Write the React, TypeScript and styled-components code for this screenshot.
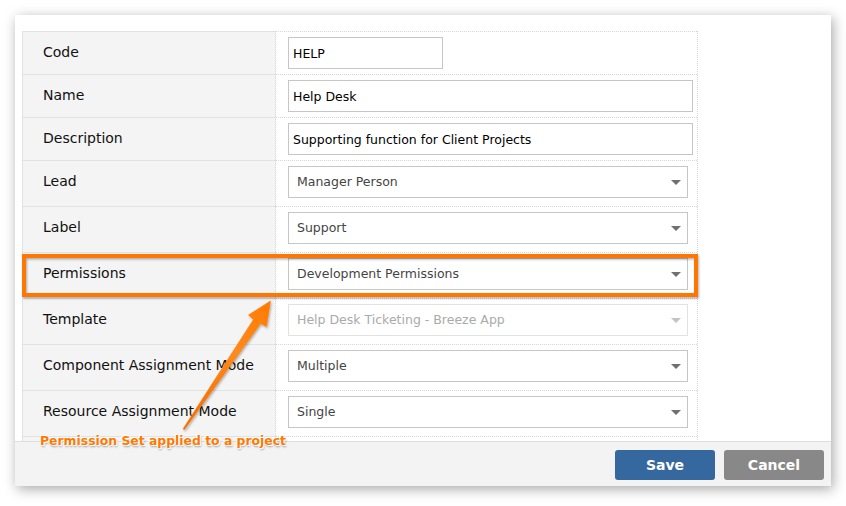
import React from "react";
import styled, { createGlobalStyle } from "styled-components";

const Global = createGlobalStyle`
  html, body { margin: 0; padding: 0; background: #ffffff; }
  body { font-family: "DejaVu Sans", Verdana, sans-serif; }
  * { box-sizing: border-box; }
`;

const Page = styled.div`
  position: relative;
  width: 846px;
  height: 506px;
  padding: 15px;
  overflow: hidden;
`;

const Dialog = styled.div`
  width: 816px;
  height: 471px;
  background: #ffffff;
  display: flex;
  flex-direction: column;
  box-shadow: 2px 3px 12px rgba(0, 0, 0, 0.35);
`;

const Body = styled.div`
  flex: 1;
  overflow: hidden;
  padding: 16px 0 0 7px;
`;

const Table = styled.div`
  width: 676px;
  border-left: 1px solid #e2e2e2;
  border-right: 1px dotted #d6d6d6;
`;

const Row = styled.div<{ $h: number }>`
  display: grid;
  grid-template-columns: 253px 1fr;
  height: ${(p) => p.$h}px;
`;

const LabelCell = styled.div`
  background: #f4f4f4;
  border-top: 1px solid #e2e2e2;
  border-right: 1px dotted #d6d6d6;
  padding: 11px 0 0 20px;
  font-size: 14px;
  line-height: 18px;
  color: #111111;
`;

const ValueCell = styled.div`
  border-top: 1px dotted #d6d6d6;
  padding: 5px 4px 0 12px;
`;

const TextInput = styled.div<{ $w?: number }>`
  width: ${(p) => (p.$w ? `${p.$w}px` : "100%")};
  height: 32px;
  border: 1px solid #c6c6c6;
  background: #fff;
  padding: 0 4px;
  display: flex;
  align-items: center;
  font-size: 12.5px;
  color: #000;
`;

const Select = styled.div<{ $disabled?: boolean }>`
  width: 400px;
  height: 32px;
  border: 1px solid ${(p) => (p.$disabled ? "#e2e2e2" : "#c6c6c6")};
  background: #fff;
  padding: 0 6px 1px 8px;
  display: flex;
  align-items: center;
  justify-content: space-between;
  font-size: 12.5px;
  color: ${(p) => (p.$disabled ? "#aaaaaa" : "#444444")};
`;

const Caret = styled.span<{ $disabled?: boolean }>`
  width: 0;
  height: 0;
  margin-top: 1px;
  border-left: 5px solid transparent;
  border-right: 5px solid transparent;
  border-top: 5px solid ${(p) => (p.$disabled ? "#c4c4c4" : "#707070")};
`;

const Footer = styled.div`
  height: 45px;
  flex: none;
  background: #f3f3f3;
  border-top: 1px solid #dedede;
  display: flex;
  justify-content: flex-end;
  align-items: flex-start;
  gap: 9px;
  padding: 8px 7px 0 0;
`;

const Button = styled.button<{ $variant: "primary" | "secondary" }>`
  width: 100px;
  height: 30px;
  border: none;
  border-radius: 3px;
  background: ${(p) => (p.$variant === "primary" ? "#34689e" : "#888888")};
  color: #ffffff;
  font-family: "DejaVu Sans", Verdana, sans-serif;
  font-weight: bold;
  font-size: 14px;
  padding: 0;
`;

const Overlay = styled.svg`
  position: absolute;
  left: 0;
  top: 0;
  pointer-events: none;
`;

const Note = styled.div`
  position: absolute;
  left: 40px;
  top: 432px;
  font-family: "DejaVu Sans", Verdana, sans-serif;
  font-weight: bold;
  font-size: 12.4px;
  line-height: 18px;
  color: #ff7800;
  white-space: nowrap;
  text-shadow: 0 0 1px #fff, 0 0 2px #fff, 1px 1px 0 #fff, -1px -1px 0 #fff,
    1px 2px 2px rgba(0, 0, 0, 0.35);
`;

type Field =
  | { label: string; kind: "input"; value: string; w?: number }
  | { label: string; kind: "select"; value: string; disabled?: boolean };

const fields: Field[] = [
  { label: "Code", kind: "input", value: "HELP", w: 155 },
  { label: "Name", kind: "input", value: "Help Desk" },
  { label: "Description", kind: "input", value: "Supporting function for Client Projects" },
  { label: "Lead", kind: "select", value: "Manager Person" },
  { label: "Label", kind: "select", value: "Support" },
  { label: "Permissions", kind: "select", value: "Development Permissions" },
  { label: "Template", kind: "select", value: "Help Desk Ticketing - Breeze App", disabled: true },
  { label: "Component Assignment Mode", kind: "select", value: "Multiple" },
  { label: "Resource Assignment Mode", kind: "select", value: "Single" },
];

export default function App() {
  return (
    <Page>
      <Global />
      <Dialog>
        <Body>
          <Table>
            {fields.map((f, i) => {
              const h = i < 3 ? 43 : 46;
              return (
                <Row key={f.label} $h={h}>
                  <LabelCell>{f.label}</LabelCell>
                  <ValueCell>
                    {f.kind === "input" ? (
                      <TextInput $w={f.w}>{f.value}</TextInput>
                    ) : (
                      <Select $disabled={f.disabled}>
                        <span>{f.value}</span>
                        <Caret $disabled={f.disabled} />
                      </Select>
                    )}
                  </ValueCell>
                </Row>
              );
            })}
            <Row $h={10}>
              <LabelCell />
              <ValueCell />
            </Row>
          </Table>
        </Body>
        <Footer>
          <Button $variant="primary">Save</Button>
          <Button $variant="secondary">Cancel</Button>
        </Footer>
      </Dialog>

      <Overlay width="846" height="506" viewBox="0 0 846 506">
        <defs>
          <linearGradient id="arrowGrad" x1="183" y1="429" x2="270" y2="301" gradientUnits="userSpaceOnUse">
            <stop offset="0" stopColor="#f06a00" />
            <stop offset="0.6" stopColor="#ff8a1e" />
            <stop offset="1" stopColor="#ff7a00" />
          </linearGradient>
          <filter id="soft" x="-20%" y="-20%" width="140%" height="140%">
            <feDropShadow dx="1" dy="1.5" stdDeviation="1.2" floodColor="#000" floodOpacity="0.3" />
          </filter>
        </defs>
        <rect
          x="24"
          y="256"
          width="672"
          height="39"
          fill="none"
          stroke="#ff7700"
          strokeWidth="4"
          filter="url(#soft)"
        />
        <path
          d="M183 429 L253.5 319.5 L248.5 315 L270.5 301 L266.5 326.5 L260.5 323.5 L184.5 429.5 Z"
          fill="url(#arrowGrad)"
          stroke="#ff7a00"
          strokeWidth="0.6"
          strokeLinejoin="round"
          filter="url(#soft)"
        />
      </Overlay>
      <Note>Permission Set applied to a project</Note>
    </Page>
  );
}
